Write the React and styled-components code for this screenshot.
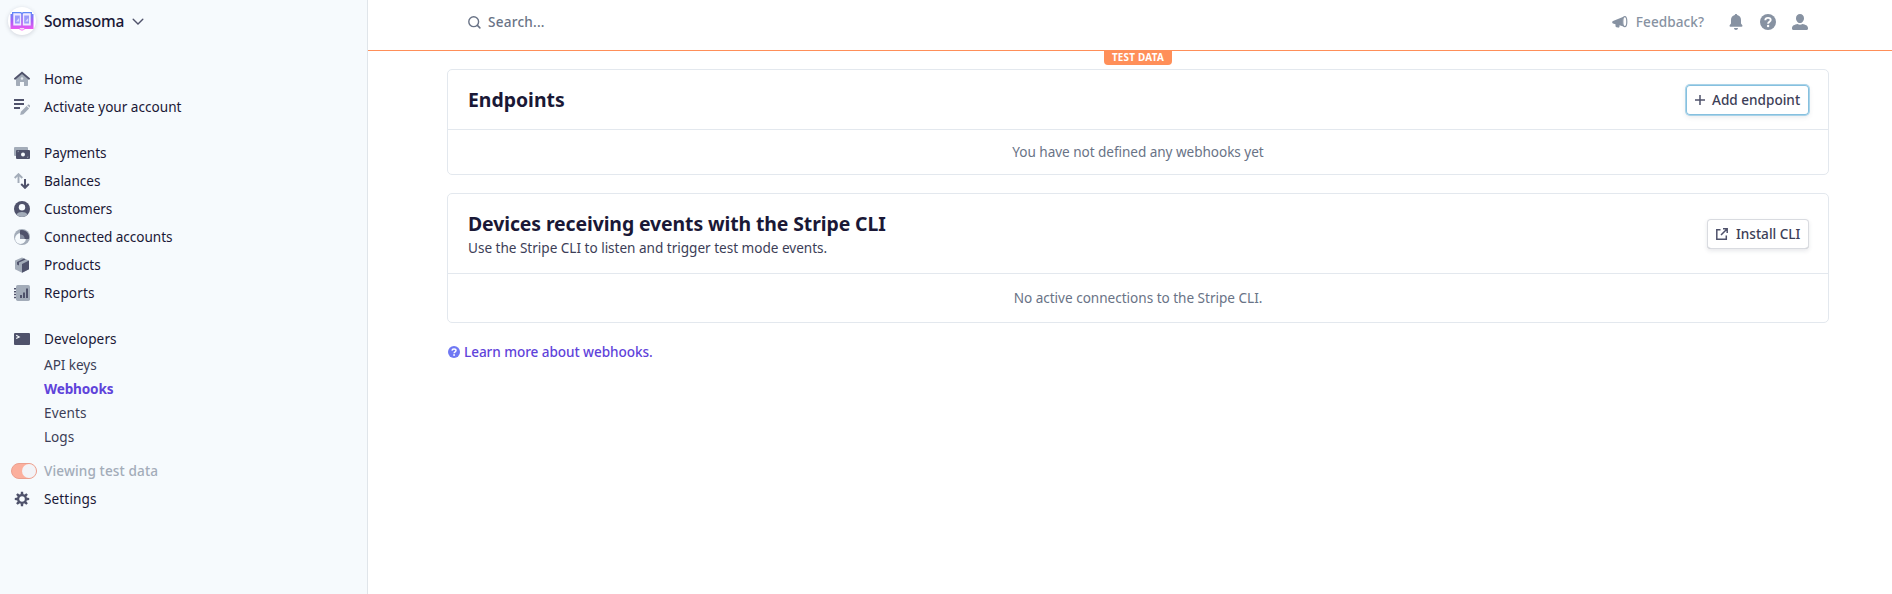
import React from 'react';
import styled, { createGlobalStyle, css } from 'styled-components';

const dark = '#4f526b';
const light = '#a3acb9';
const slate = '#8792a2';

const GlobalStyle = createGlobalStyle`
  * { box-sizing: border-box; }
  body {
    margin: 0;
    background: #fff;
    color: #1a1836;
    font-family: 'Noto Sans', 'Open Sans', sans-serif;
    font-size: 13.58px;
    line-height: 20px;
  }
`;

const Page = styled.div`
  display: flex;
  height: 594px;
  overflow: hidden;
`;

const Sidebar = styled.aside`
  display: flex;
  flex-direction: column;
  flex: none;
  width: 368px;
  padding-top: 7px;
  background: #f6fafd;
  border-right: 1px solid #e0e5ea;
`;

const Account = styled.div`
  display: flex;
  align-items: center;
  height: 28px;
  margin-bottom: 30px;
  padding-left: 8px;
`;

const Avatar = styled.span`
  display: flex;
  align-items: center;
  justify-content: center;
  width: 28px;
  height: 28px;
  margin-right: 8px;
  border-radius: 50%;
  background: #fff;
  box-shadow: 0 1px 4px rgba(60, 66, 87, 0.2);
`;

const AccountName = styled.span`
  margin-right: 8px;
  font-size: 15.52px;
  font-weight: 500;
  line-height: 21px;
  letter-spacing: -0.25px;
`;

const NavGroup = styled.nav`
  display: flex;
  flex-direction: column;
  margin-bottom: ${(p) => p.$gap ?? 18}px;
`;

const NavItem = styled.a`
  display: flex;
  align-items: center;
  gap: 14px;
  height: 28px;
  padding-left: 14px;
  letter-spacing: ${(p) => p.$track ?? 0}px;

  svg {
    flex: none;
  }
`;

const SubItem = styled.a`
  height: 24px;
  padding-left: 44px;
  line-height: 24px;
  color: #3c3e57;
  letter-spacing: ${(p) => p.$track ?? 0}px;
  ${(p) =>
    p.$active &&
    css`
      color: #5f43da;
      font-weight: 700;
    `}
`;

const TestMode = styled.div`
  display: flex;
  align-items: center;
  gap: 7px;
  height: 28px;
  padding-left: 11px;
  color: ${light};
  font-weight: 500;
  letter-spacing: 0.12px;
`;

const Toggle = styled.span`
  display: flex;
  justify-content: flex-end;
  width: 26px;
  height: 16px;
  border: 1px solid #eb9f8e;
  border-radius: 8px;
  background: #fbaf9d;
`;

const Knob = styled.span`
  width: 14px;
  height: 14px;
  border-radius: 50%;
  background: #f2f3f7;
`;

const Main = styled.main`
  display: flex;
  flex: 1;
  flex-direction: column;
`;

const Topbar = styled.header`
  position: relative;
  display: flex;
  flex: none;
  align-items: flex-start;
  justify-content: space-between;
  height: 51px;
  padding: 12px 84px 0 100px;
  border-bottom: 1px solid #ff8f59;
`;

const Search = styled.div`
  display: flex;
  align-items: center;
  gap: 7px;
  color: #697386;
  font-weight: 500;
  letter-spacing: 0.22px;
`;

const Tools = styled.div`
  display: flex;
  align-items: center;
  gap: 16px;
`;

const Feedback = styled.a`
  display: flex;
  align-items: center;
  gap: 8px;
  margin-right: 8px;
  color: ${slate};
  font-weight: 500;
  letter-spacing: 0.05px;
`;

const TestBadge = styled.span`
  position: absolute;
  top: 50px;
  left: 736px;
  width: 68px;
  height: 15px;
  border-radius: 0 0 4px 4px;
  background: #ff8f59;
  color: #fff;
  font-size: 9.9px;
  font-weight: 700;
  line-height: 15px;
  letter-spacing: 0.25px;
  text-align: center;
`;

const Content = styled.div`
  display: flex;
  flex-direction: column;
  gap: 18px;
  padding: 18px 63px 0 79px;
`;

const Card = styled.section`
  border: 1px solid #e3e8ee;
  border-radius: 5px;
`;

const CardHeader = styled.div`
  display: flex;
  align-items: center;
  justify-content: space-between;
  height: ${(p) => p.$height}px;
  padding: 0 19px 0 20px;
  border-bottom: 1px solid #e3e8ee;
`;

const Heading = styled.h2`
  margin: 0;
  font-size: 19.4px;
  font-weight: 700;
  line-height: 28px;
  letter-spacing: ${(p) => p.$track ?? 0}px;
`;

const Subheading = styled.p`
  margin: 0;
  color: #3c3e57;
  letter-spacing: -0.02px;
`;

const Empty = styled.div`
  display: flex;
  align-items: center;
  justify-content: center;
  height: ${(p) => p.$height}px;
  color: #697386;
  letter-spacing: ${(p) => p.$track ?? 0}px;
`;

const Button = styled.button`
  display: flex;
  align-items: center;
  gap: ${(p) => p.$gap ?? 8}px;
  height: 30px;
  width: ${(p) => p.$width}px;
  padding: 0 0 0 9px;
  border: 0;
  border-radius: 4px;
  background: #fff;
  color: #3c3e57;
  font: inherit;
  font-weight: 500;
  white-space: nowrap;
  box-shadow: ${(p) =>
    p.$focused
      ? 'inset 0 0 0 1px #86c0df, 0 0 0 1px #a9d3e8, 0 2px 5px rgba(60,66,87,.12)'
      : 'inset 0 0 0 1px #d9dbe0, inset 0 -1px 0 #b9bbc2, 0 2px 4px rgba(60,66,87,.12)'};
`;

const LearnMore = styled.a`
  display: flex;
  align-items: center;
  gap: 4px;
  padding-left: 1px;
  margin-top: 1px;
  color: #5f43da;
  font-weight: 500;
  letter-spacing: -0.07px;
`;

const Icon = ({ size = 16, w, h, box, children }) => (
  <svg width={w ?? size} height={h ?? size} viewBox={box ?? `0 0 ${w ?? size} ${h ?? size}`} fill="none">
    {children}
  </svg>
);

const BookLogo = () => (
  <Icon w={24} h={20}>
    <defs>
      <linearGradient id="book" x1="0" y1="0" x2="0" y2="1">
        <stop offset="0" stopColor="#5b8cf8" />
        <stop offset=".5" stopColor="#a95cf5" />
        <stop offset="1" stopColor="#f95cf0" />
      </linearGradient>
    </defs>
    <path d="M2 1h9l1 .8L13 1h9v2h1.500v15H15c-.6 0-1 1.500-3 1.500S9.600 18 9 18H.5V3H2z" fill="url(#book)" />
    <path d="M3.300 2.300h7.200l.7.700v11.500H3.300zM20.700 2.300h-7.200l-.7.700v11.500h7.900z" fill="#efeaff" />
    <path d="M5 4.500h4.800v8H5zM14.200 4.500H19v8h-4.800z" fill="#9a9cfa" />
    <path d="M6 10.500l3-3.500v3.500zM15.200 10.500l3-3.500v3.500z" fill="#dcd9ff" />
    <path d="M9.500 17.300h5l-1 1.300h-3z" fill="#fff" />
  </Icon>
);

const HomeIcon = () => (
  <Icon>
    <path d="M2 8l6-5.500L14 8v6.300a.7.700 0 0 1-.7.700H10v-4H6v4H2.700a.7.700 0 0 1-.7-.7z" fill={light} />
    <circle cx="8" cy="7.500" r="1.300" fill="#e3e8ee" />
    <path d="M1 7.700L8 1.700l7 6" stroke={dark} strokeWidth="1.900" strokeLinecap="round" />
  </Icon>
);
const ActivateIcon = () => (
  <Icon>
    <path d="M0 1h10M0 5h10M0 9h6" stroke={dark} strokeWidth="1.800" />
    <path d="M6.200 16l.7-3.200 5.700-5.700 2.500 2.500-5.700 5.700zM13.300 6.400l.6-.6a1 1 0 0 1 1.400 0l.8.800a1 1 0 0 1 0 1.400l-.4.600z" fill={light} />
  </Icon>
);
const PaymentsIcon = () => (
  <Icon>
    <rect y="2" width="14" height="9" rx="1" fill={light} />
    <rect x="2" y="5" width="14" height="9" rx="1" fill={dark} />
    <circle cx="9" cy="9.500" r="2" fill="#f6fafd" />
    <path d="M4 7.200v-.9h.9M14 11.500v.9h-.9" stroke={light} strokeWidth=".7" />
  </Icon>
);
const BalancesIcon = () => (
  <Icon>
    <path d="M4.500 10V1.300M.7 5l3.800-3.800L8.300 5" stroke={light} strokeWidth="1.900" />
    <path d="M11 6v8.700M7.200 11l3.800 3.800 3.800-3.800" stroke={dark} strokeWidth="2" />
  </Icon>
);
const CustomersIcon = () => (
  <Icon>
    <circle cx="8" cy="8" r="8" fill={dark} />
    <path d="M2.300 13.600C3.500 11.700 5.600 11 8 11s4.500.7 5.700 2.600A8 8 0 0 1 8 16a8 8 0 0 1-5.700-2.400z" fill={light} />
    <circle cx="8" cy="6.300" r="3.200" fill="#f6fafd" />
  </Icon>
);
const ConnectedIcon = () => (
  <Icon>
    <circle cx="8" cy="8" r="8" fill={light} />
    <circle cx="6.500" cy="9.500" r="5.400" fill="#f6fafd" />
    <path d="M6 1.200a7.200 7.200 0 0 1 8.800 8.800H6z" fill={dark} />
    <path d="M6 5.300a5 5 0 0 1 4.700 4.700H6z" fill="#868da0" />
  </Icon>
);
const ProductsIcon = () => (
  <Icon>
    <path d="M8 .4L15 3.600v8.600l-7 3.500-7-3.500V3.600z" fill={light} />
    <path d="M8 7l7-3.400v8.600l-7 3.500zM3 4.900L10 1.600l1.700.8L5 5.600v3L3 7.600z" fill={dark} />
  </Icon>
);
const ReportsIcon = () => (
  <Icon>
    <rect x="2" width="14" height="16" rx="1.700" fill={light} />
    <path d="M0 3.800h2M0 6.700h2M0 9.600h2M0 12.500h2" stroke={dark} strokeWidth="1.500" />
    <path d="M6 10h2v3H6zM9 7.500h2V13H9zM12 3.500h2V13h-2z" fill={dark} />
  </Icon>
);
const DevelopersIcon = () => (
  <Icon>
    <rect y="2" width="16" height="12" rx="1" fill={dark} />
    <path d="M2.200 4.300l3 1.600-3 1.700" stroke="#f6fafd" strokeWidth="1.200" />
  </Icon>
);
const SettingsIcon = () => (
  <Icon>
    <circle cx="8" cy="8" r="3.900" stroke={dark} strokeWidth="2.200" />
    {[0, 45, 90, 135, 180, 225, 270, 315].map((angle) => (
      <path key={angle} d="M6.900 .8h2.200l.3 3H6.600z" fill={dark} transform={`rotate(${angle} 8 8)`} />
    ))}
  </Icon>
);

const ChevronIcon = () => (
  <Icon w={12} h={9}>
    <path d="M1.200 2.300L6 7l4.800-4.700" stroke={dark} strokeWidth="1.400" strokeLinecap="round" />
  </Icon>
);
const SearchIcon = () => (
  <Icon size={13}>
    <circle cx="5.700" cy="5.700" r="4.900" stroke="#697386" strokeWidth="1.400" />
    <path d="M9.400 9.400l2.500 2.500" stroke="#697386" strokeWidth="1.500" strokeLinecap="round" />
  </Icon>
);
const MegaphoneIcon = () => (
  <Icon w={16} h={14}>
    <path d="M1 6L11.500 1.800C10.300 5 10.300 8.200 11.500 11.500L7.500 10.300v1.300c0 .8-.6 1.200-1.400 1l-1.700-.4c-.6-.2-.9-.6-.9-1.200V9.200L1 8.500C-.1 8.100-.1 6.400 1 6z" fill={slate} />
    <ellipse cx="12.800" cy="6.700" rx="2" ry="5" stroke={slate} strokeWidth="1.200" />
  </Icon>
);
const BellIcon = () => (
  <Icon>
    <path d="M8 0c.8 0 1.200.5 1.200 1.100C11.700 1.700 13 3.600 13 6v3.500l1.300 1.800c.4.700.1 1.500-.7 1.500H2.400c-.8 0-1.100-.8-.7-1.500L3 9.500V6c0-2.400 1.300-4.300 3.800-4.900C6.800.5 7.200 0 8 0zM6 14h4c0 1.200-.9 2-2 2s-2-.8-2-2z" fill={slate} />
  </Icon>
);
const HelpIcon = ({ size = 16, color = slate }) => (
  <Icon size={size} box="0 0 16 16">
    <circle cx="8" cy="8" r="8" fill={color} />
    <path d="M5.300 6.200C5.400 4.600 6.500 3.900 8 3.900s2.700.8 2.700 2.200C10.700 7.700 8.100 7.900 8.100 9.700" stroke="#fff" strokeWidth="1.900" />
    <circle cx="8.100" cy="12" r="1.200" fill="#fff" />
  </Icon>
);
const UserIcon = () => (
  <Icon>
    <path d="M8 0c2.300 0 4 1.700 4 4.200S10.300 9 8 9 4 6.700 4 4.200 5.700 0 8 0zM0 14c0-2.600 2.600-3.500 5.500-4.100 1.500 1 3.500 1 5 0C13.400 10.500 16 11.400 16 14v.8c0 .7-.5 1.200-1.200 1.200H1.200C.5 16 0 15.500 0 14.800z" fill={slate} />
  </Icon>
);
const PlusIcon = () => (
  <Icon size={10}>
    <path d="M5 0v10M0 5h10" stroke={dark} strokeWidth="1.500" />
  </Icon>
);
const ExternalIcon = () => (
  <Icon size={12}>
    <path d="M4.500 1.700H.8v9.500h9.500V7.500M7 .8h4.200V5M11 1L5 7" stroke={dark} strokeWidth="1.500" />
  </Icon>
);

const primaryNav = [
  { label: 'Home', Glyph: HomeIcon, track: 0 },
  { label: 'Activate your account', Glyph: ActivateIcon, track: 0 },
];
const businessNav = [
  { label: 'Payments', Glyph: PaymentsIcon, track: -0.05 },
  { label: 'Balances', Glyph: BalancesIcon, track: -0.03 },
  { label: 'Customers', Glyph: CustomersIcon, track: -0.1 },
  { label: 'Connected accounts', Glyph: ConnectedIcon, track: -0.04 },
  { label: 'Products', Glyph: ProductsIcon, track: 0.05 },
  { label: 'Reports', Glyph: ReportsIcon, track: 0.14 },
];
const developerNav = [
  { label: 'API keys', track: -0.05 },
  { label: 'Webhooks', track: -0.16, active: true },
  { label: 'Events', track: 0.1 },
  { label: 'Logs', track: 0 },
];

const NavRow = ({ label, Glyph, track }) => (
  <NavItem $track={track}>
    <Glyph />
    {label}
  </NavItem>
);

export default function App() {
  return (
    <Page>
      <GlobalStyle />
      <Sidebar>
        <Account>
          <Avatar><BookLogo /></Avatar>
          <AccountName>Somasoma</AccountName>
          <ChevronIcon />
        </Account>
        <NavGroup>{primaryNav.map((item) => <NavRow key={item.label} {...item} />)}</NavGroup>
        <NavGroup>{businessNav.map((item) => <NavRow key={item.label} {...item} />)}</NavGroup>
        <NavGroup $gap={8}>
          <NavRow label="Developers" Glyph={DevelopersIcon} track={0.1} />
          {developerNav.map(({ label, track, active }) => (
            <SubItem key={label} $track={track} $active={active}>{label}</SubItem>
          ))}
        </NavGroup>
        <TestMode>
          <Toggle><Knob /></Toggle>
          Viewing test data
        </TestMode>
        <NavRow label="Settings" Glyph={SettingsIcon} track={0.12} />
      </Sidebar>
      <Main>
        <Topbar>
          <Search><SearchIcon />Search...</Search>
          <Tools>
            <Feedback><MegaphoneIcon />Feedback?</Feedback>
            <BellIcon />
            <HelpIcon />
            <UserIcon />
          </Tools>
          <TestBadge>TEST DATA</TestBadge>
        </Topbar>
        <Content>
          <Card>
            <CardHeader $height={60}>
              <Heading>Endpoints</Heading>
              <Button $focused $width={123} $gap={7}><PlusIcon />Add endpoint</Button>
            </CardHeader>
            <Empty $height={44} $track={-0.05}>You have not defined any webhooks yet</Empty>
          </Card>
          <Card>
            <CardHeader $height={80}>
              <div>
                <Heading $track={-0.09}>Devices receiving events with the Stripe CLI</Heading>
                <Subheading>Use the Stripe CLI to listen and trigger test mode events.</Subheading>
              </div>
              <Button $width={102}><ExternalIcon />Install CLI</Button>
            </CardHeader>
            <Empty $height={48} $track={-0.02}>No active connections to the Stripe CLI.</Empty>
          </Card>
          <LearnMore><HelpIcon size={12} color="#6f78f3" />Learn more about webhooks.</LearnMore>
        </Content>
      </Main>
    </Page>
  );
}
